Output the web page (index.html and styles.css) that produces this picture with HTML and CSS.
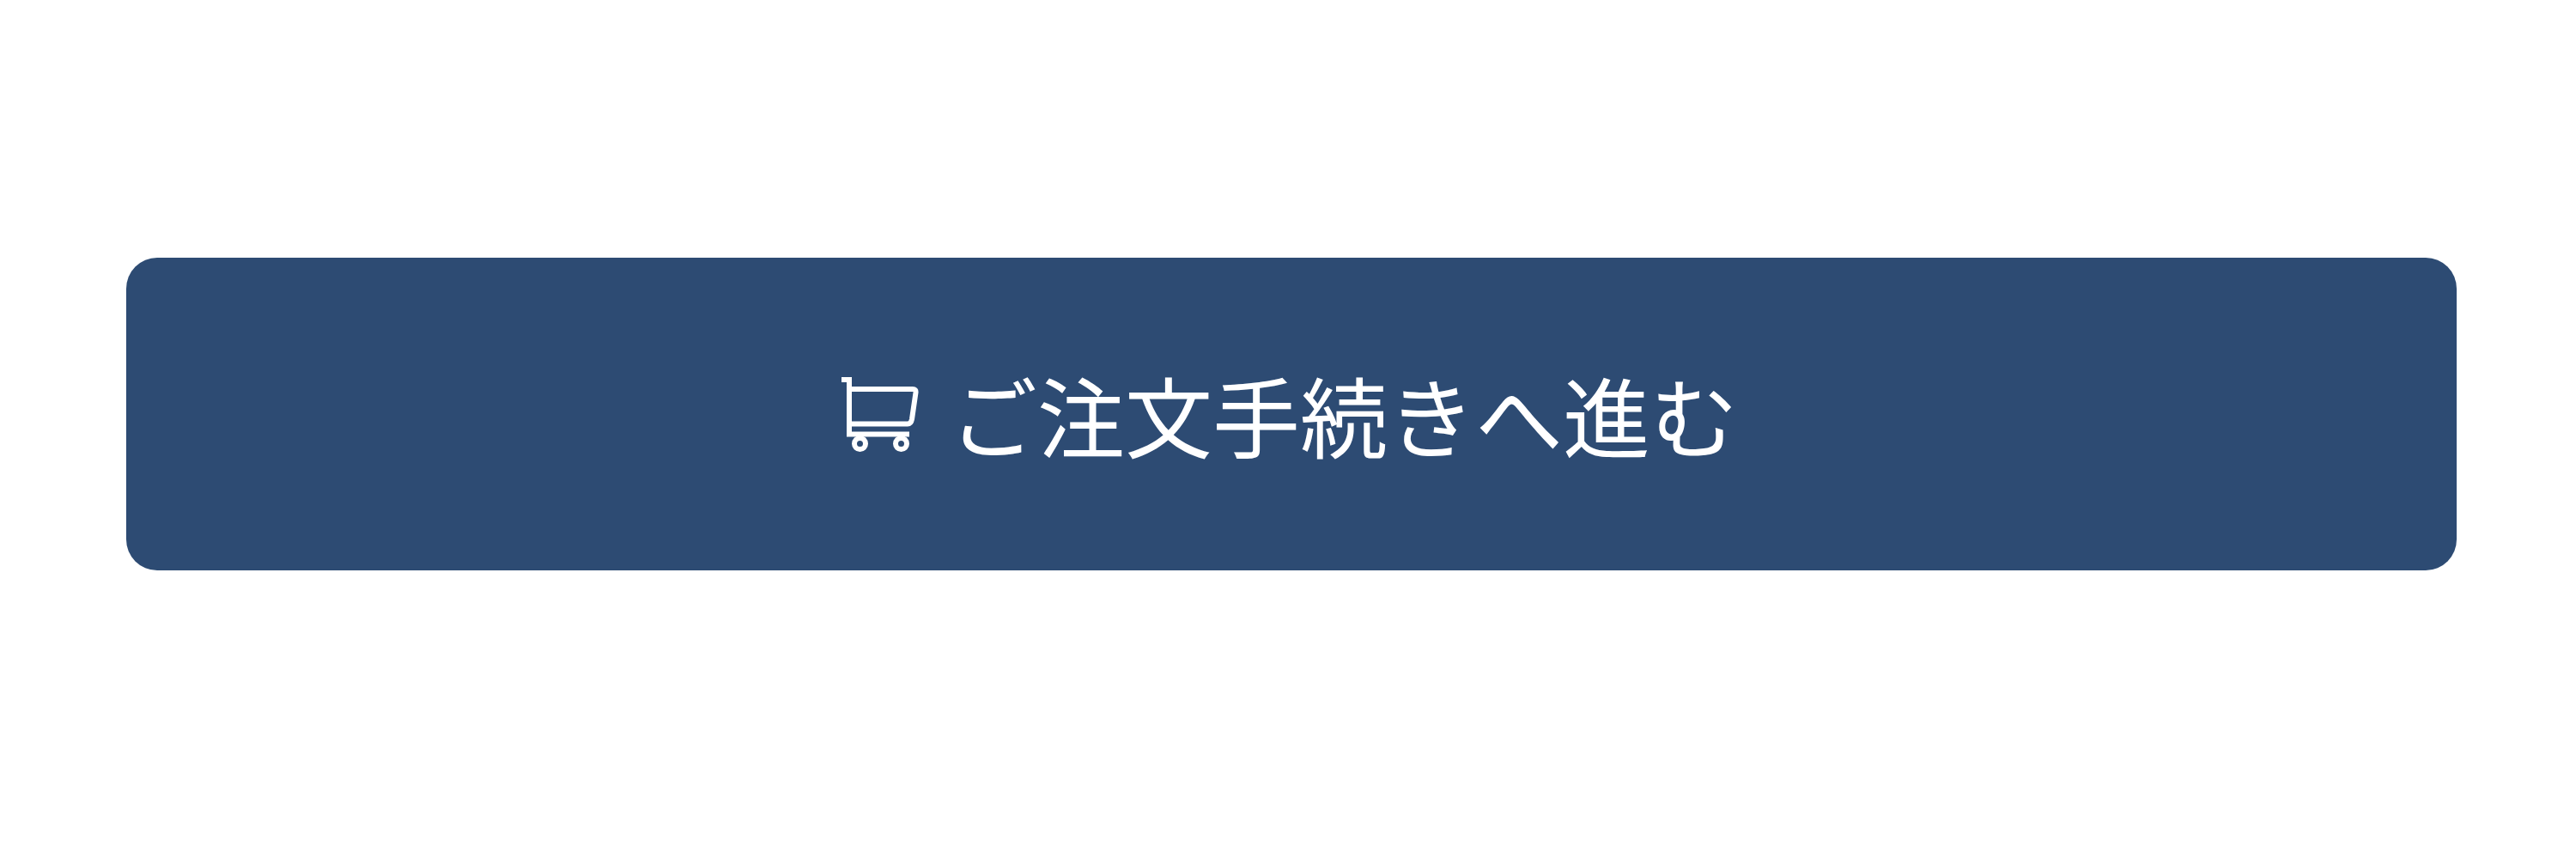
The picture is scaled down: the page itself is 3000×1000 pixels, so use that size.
FILE: index.html
```html
<!DOCTYPE html>
<html lang="ja">
<head>
<meta charset="utf-8">
<title>ご注文手続きへ進む</title>
<link rel="stylesheet" href="styles.css">
</head>
<body>
<main class="page">
<button class="checkout" type="button">
<svg class="cart" viewBox="0 0 90 88" aria-hidden="true">
<path d="M0 4H9V67.500H79M9 15H83Q87 15 86.500 19L82 50Q81 55.500 77 55.500H9"/>
<circle cx="21.500" cy="78.500" r="6.500"/>
<circle cx="69.500" cy="78.500" r="6.500"/>
</svg>
<span class="label">ご注文手続きへ進む</span>
</button>
</main>
</body>
</html>
```
FILE: styles.css
```css
body {
  margin: 0;
  background: #fff;
}
.page {
  padding: 300px 139px 300px 147px;
}
.checkout {
  display: flex;
  align-items: center;
  justify-content: center;
  gap: 36px;
  width: 100%;
  padding: 106px 4px 106px 0;
  border: 0;
  border-radius: 36px;
  background: #2d4b73;
  color: #fff;
  font: 400 102px/152px "Noto Sans CJK JP", sans-serif;
}
.cart {
  width: 90px;
  height: 88px;
  fill: none;
  stroke: currentColor;
  stroke-width: 6;
}
```
